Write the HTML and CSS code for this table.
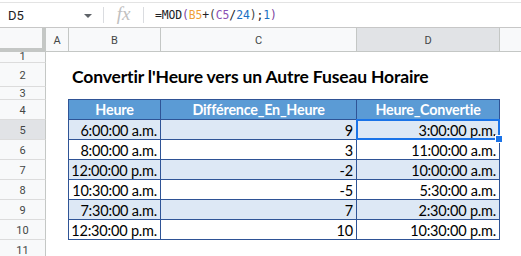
FILE: index.html
```html
<!DOCTYPE html>
<html lang="fr">
<head>
<meta charset="utf-8">
<title>Convertir l'Heure</title>
<link rel="stylesheet" href="styles.css">
</head>
<body>
<div class="app">
  <div class="fbar">
    <div class="namebox">D5</div>
    <svg class="caret" width="8" height="4" viewBox="0 0 8 4"><path d="M0 0h8L4 4z" fill="#5f6368"/></svg>
    <div class="sep"></div>
    <div class="fx">fx</div>
    <div class="sep"></div>
    <div class="formula">=MOD<span class="p1">(</span><span class="r1">B5</span>+<span class="p2">(</span><span class="r2">C5</span>/<span class="num">24</span><span class="p2">)</span>;<span class="num">1</span><span class="p1">)</span></div>
  </div>
  <div class="sheet">
    <div class="corner"></div>
    <div class="colheads">
      <div class="ch cha">A</div>
      <div class="ch chb">B</div>
      <div class="ch chc">C</div>
      <div class="ch chd sel">D</div>
      <div class="ch che"></div>
    </div>
    <div class="rowheads">
      <div class="rh r-s1">1</div>
      <div class="rh r-s2">2</div>
      <div class="rh r-s3">3</div>
      <div class="rh">4</div>
      <div class="rh sel">5</div>
      <div class="rh">6</div>
      <div class="rh">7</div>
      <div class="rh">8</div>
      <div class="rh">9</div>
      <div class="rh">10</div>
      <div class="rh r-last">11</div>
    </div>
    <div class="data">
      <div class="title">Convertir l'Heure vers un Autre Fuseau Horaire</div>
      <div class="tbl">
        <div class="th">Heure</div>
        <div class="th">Différence_En_Heure</div>
        <div class="th">Heure_Convertie</div>

        <div class="td alt">6:00:00 a.m.</div>
        <div class="td alt">9</div>
        <div class="td alt active">3:00:00 p.m.<span class="handle"></span></div>

        <div class="td">8:00:00 a.m.</div>
        <div class="td">3</div>
        <div class="td">11:00:00 a.m.</div>

        <div class="td alt">12:00:00 p.m.</div>
        <div class="td alt">-2</div>
        <div class="td alt">10:00:00 a.m.</div>

        <div class="td">10:30:00 a.m.</div>
        <div class="td">-5</div>
        <div class="td">5:30:00 a.m.</div>

        <div class="td alt">7:30:00 a.m.</div>
        <div class="td alt">7</div>
        <div class="td alt">2:30:00 p.m.</div>

        <div class="td">12:30:00 p.m.</div>
        <div class="td">10</div>
        <div class="td">10:30:00 p.m.</div>
      </div>
    </div>
  </div>
</div>
</body>
</html>
```

FILE: styles.css
```css
* { box-sizing: border-box; }
html, body { margin: 0; padding: 0; background: #fff; }
body { width: 521px; height: 256px; overflow: hidden; font-family: Roboto, "Liberation Sans", sans-serif; }

.app { width: 521px; height: 256px; display: flex; flex-direction: column; }

.fbar {
  height: 26px;
  border-top: 1px solid #e3e3e3;
  margin-top: 2px;
  border-bottom: 1px solid #c7c7c7;
  display: flex;
  align-items: center;
  flex: none;
}
.namebox { width: 82px; padding-left: 8px; font-size: 13px; color: #202124; }
.caret { margin-left: 2px; margin-right: 11px; margin-top: 1px; }
.sep { width: 1px; height: 16px; background: #dadce0; }
.fx {
  width: 39px; text-align: center;
  font-family: "Liberation Serif", serif; font-style: italic;
  font-size: 19px; color: #c0c0c0; line-height: 1;
  margin-top: -3px;
}
.formula {
  padding-left: 11px;
  font-family: "DejaVu Sans Mono", monospace;
  font-size: 11.4px;
  color: #202124;
  letter-spacing: -0.1px;
}
.r1 { color: #f09f36; }
.r2 { color: #8a4fb4; }
.p1 { color: #7b3fa0; }
.p2 { color: #444; }
.num { color: #1b6fc2; }

.sheet {
  flex: 1;
  display: grid;
  grid-template-columns: 46px 1fr;
  grid-template-rows: 24px 1fr;
}
.corner {
  background: #f8f9fa;
  border-right: 4px solid #c4c7c5;
  border-bottom: 4px solid #c4c7c5;
}
.colheads { display: flex; }
.ch {
  height: 24px;
  background: #f8f9fa;
  border-right: 1px solid #c4c7c5;
  border-bottom: 1px solid #c4c7c5;
  font-size: 11px;
  color: #444746;
  display: flex; align-items: center; justify-content: center;
  padding-top: 1px;
}
.cha { width: 23px; }
.chb { width: 92px; }
.chc { width: 196px; }
.chd { width: 143px; }
.che { flex: 1; border-right: none; }
.ch.sel { background: #e1e3e6; }

.rowheads { display: flex; flex-direction: column; }
.rh {
  height: 20px;
  background: #f8f9fa;
  border-right: 1px solid #c4c7c5;
  border-bottom: 1px solid #dcdcdc;
  font-size: 11px;
  color: #444746;
  display: flex; align-items: center; justify-content: center;
  padding-top: 1px;
}
.rh.r-s1 { height: 11px; align-items: flex-end; line-height: 1; padding-top: 0; }
.rh.r-s2 { height: 24px; }
.rh.r-s3 { height: 13px; line-height: 1; }
.rh.r-last { flex: 1; border-bottom: none; align-items: flex-start; padding-top: 4px; }
.rh.sel { background: #e1e3e6; }

.data { padding-top: 11px; }
.title {
  height: 24px;
  padding-left: 26px;
  font-family: Lato, "Liberation Sans", sans-serif;
  font-weight: bold;
  font-size: 17.5px;
  color: #000;
  line-height: 27px;
  letter-spacing: -0.15px;
  white-space: nowrap;
}
.tbl {
  margin-top: 12px;
  margin-left: 22px;
  width: 432px;
  display: grid;
  grid-template-columns: 91px 195px 142px;
  grid-auto-rows: 19px;
  gap: 1px;
  padding: 1px;
  background: #2f5496;
}
.th {
  background: #5b9bd5;
  color: #fff;
  font-family: Lato, "Liberation Sans", sans-serif;
  font-weight: bold;
  font-size: 14.3px;
  text-align: center;
  line-height: 20px;
  letter-spacing: -0.2px;
}
.td {
  background: #fff;
  color: #000;
  font-family: Lato, "Liberation Sans", sans-serif;
  font-size: 14.5px;
  text-align: right;
  padding-right: 3px;
  line-height: 21px;
  letter-spacing: -0.2px;
  white-space: nowrap;
}
.td.alt { background: #dde8f5; }
.td.active {
  position: relative;
  outline: 2px solid #1a73e8;
  outline-offset: -1px;
}
.handle {
  position: absolute;
  right: -4px;
  bottom: -4px;
  width: 6px;
  height: 6px;
  background: #1a73e8;
  border: 1px solid #fff;
  box-sizing: content-box;
}
```
